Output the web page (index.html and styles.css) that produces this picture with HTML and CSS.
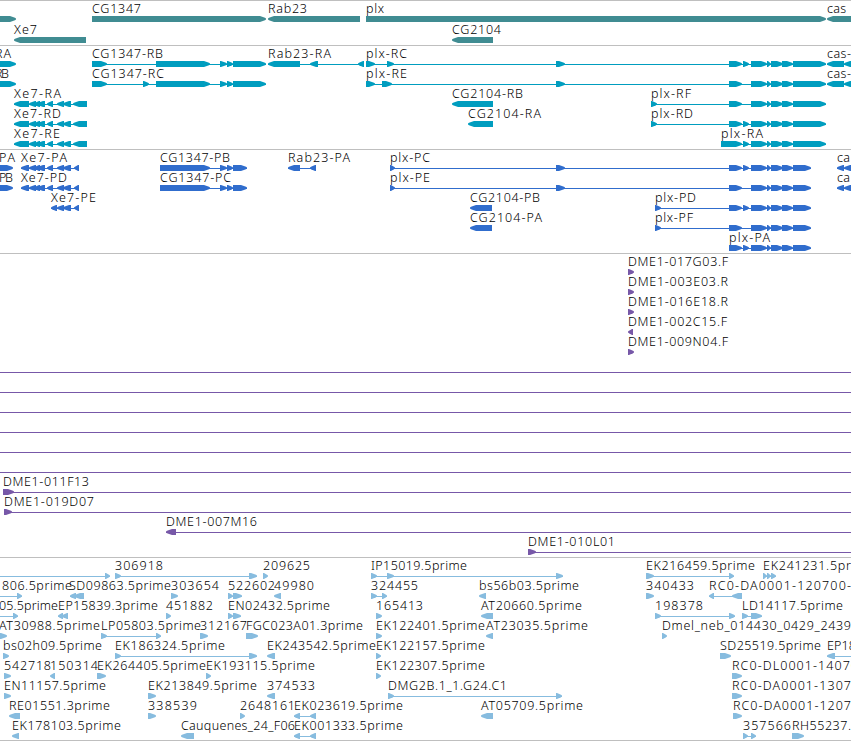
FILE: index.html
```
<!DOCTYPE html>
<html>
<head>
    <meta charset="utf-8">
    <title>Genome tracks</title>
    <link rel="stylesheet" href="styles.css">
</head>
<body>
<div class="browser" id="browser">
    <div class="track genes" id="genes"></div>
    <div class="track transcripts" id="transcripts"></div>
    <div class="track proteins" id="proteins"></div>
    <div class="track clones" id="clones"></div>
    <div class="track ests" id="ests"></div>
</div>
<script src="tracks.js"></script>
</body>
</html>
```
FILE: styles.css
```
* {
    margin: 0;
    padding: 0;
    box-sizing: border-box;
}

body {
    background: #fff;
    overflow: hidden;
}

.browser {
    width: 851px;
    border-bottom: 1px solid #bfbfbf;
}

.track {
    border-top: 1px solid #bfbfbf;
    overflow: hidden;
}

.track svg {
    display: block;
    width: 851px;
    height: 100%;
}

.track text {
    font-family: "Noto Sans", "DejaVu Sans", sans-serif;
    font-size: 12.5px;
    font-weight: 300;
    fill: #000;
}

.genes {
    height: 45px;
    fill: #408c92;
}

.transcripts {
    height: 104px;
    fill: #009dbf;
}

.proteins {
    height: 104px;
    fill: #306dcd;
}

.clones {
    height: 304px;
    fill: #7758a8;
}

.ests {
    height: 183px;
    fill: #87bcdf;
}
```
FILE: tracks.js
```
var NS = "http://www.w3.org/2000/svg";
var WIDTH = 851;
var BAR_TOP = 15;
var BAR_HEIGHT = 6;
var TIP = 6;

// exons shared by several transcripts
var xe7 = [[14, 29], [29, 36], [34, 40], [37, 45], [47, 53], [57, 64], [63, 71], [73, 87]];
var xe7p = [[21, 29], [29, 36], [34, 40], [37, 45], [47, 53], [57, 64], [63, 71], [74, 79]];
var plxTail = [[751, 767], [767, 771], [771, 783], [782, 793], [793, 826]];
var plxTailP = [[751, 767], [767, 771], [771, 783], [782, 793], [793, 811]];
var cgTail = [[220, 227], [227, 233], [233, 266]];
var cgTailP = [[220, 227], [227, 233], [233, 247]];
var small = [[743, 749]];

// [row, strand, label, label start, label end, exons]
var genes = [
    [0, 1, "", 0, 0, [[-20, 16]]],
    [0, 1, "CG1347", 92, 141, [[92, 266]]],
    [0, -1, "Rab23", 268, 307, [[268, 360]]],
    [0, 1, "plx", 366, 384, [[366, 826]]],
    [0, -1, "cas", 827, 846, [[827, 880]]],
    [1, -1, "Xe7", 14, 37, [[14, 86]]],
    [1, -1, "CG2104", 452, 501, [[452, 493]]]
];

var transcripts = [
    [0, 1, "RA", -5, 11, [[-20, 16]]],
    [0, 1, "CG1347-RB", 92, 163, [[92, 107], [156, 210]].concat(cgTail)],
    [0, -1, "Rab23-RA", 268, 331, [[268, 300], [310, 318], [358, 364]]],
    [0, 1, "plx-RC", 366, 407, [[366, 375], [387, 394], [556, 565], [729, 742]].concat(small, plxTail)],
    [0, -1, "cas-", 827, 851, [[827, 844], [844, 870]]],
    [1, 1, "RB", -5, 9, [[-20, 16]]],
    [1, 1, "CG1347-RC", 92, 164, [[92, 107], [143, 149], [156, 210]].concat(cgTail)],
    [1, 1, "plx-RE", 366, 407, [[366, 375], [382, 392], [556, 565], [729, 742]].concat(plxTail)],
    [1, -1, "cas-", 827, 851, [[827, 844], [844, 870]]],
    [2, -1, "Xe7-RA", 14, 61, xe7],
    [2, -1, "CG2104-RB", 452, 523, [[452, 493]]],
    [2, 1, "plx-RF", 651, 691, [[651, 657], [729, 742]].concat(plxTail)],
    [3, -1, "Xe7-RD", 14, 61, xe7],
    [3, -1, "CG2104-RA", 468, 541, [[468, 493]]],
    [3, 1, "plx-RD", 651, 693, [[651, 657], [729, 742]].concat(small, plxTail)],
    [4, -1, "Xe7-RE", 14, 60, xe7],
    [4, 1, "plx-RA", 721, 763, [[721, 742]].concat(small, plxTail)]
];

var proteins = [
    [0, 1, "PA", -1, 15, [[-20, 13]]],
    [0, -1, "Xe7-PA", 21, 67, xe7p],
    [0, 1, "CG1347-PB", 160, 230, [[160, 210]].concat(cgTailP)],
    [0, -1, "Rab23-PA", 288, 350, [[288, 300], [310, 316]]],
    [0, 1, "plx-PC", 390, 430, [[390, 395], [556, 565], [729, 742]].concat(small, plxTailP)],
    [0, -1, "ca", 837, 850, [[837, 844], [844, 870]]],
    [1, 1, "PB", -1, 13, [[-20, 13]]],
    [1, -1, "Xe7-PD", 21, 67, xe7p],
    [1, 1, "CG1347-PC", 160, 231, [[160, 210]].concat(cgTailP)],
    [1, 1, "plx-PE", 390, 430, [[390, 395], [556, 565], [729, 742]].concat(plxTailP)],
    [1, -1, "ca", 837, 850, [[837, 844], [844, 870]]],
    [2, -1, "Xe7-PE", 51, 96, [[51, 57], [57, 64], [63, 71], [74, 79]]],
    [2, -1, "CG2104-PB", 470, 540, [[470, 492]]],
    [2, 1, "plx-PD", 655, 696, [[655, 661], [729, 742]].concat(small, plxTailP)],
    [3, -1, "CG2104-PA", 470, 542, [[470, 492]]],
    [3, 1, "plx-PF", 655, 693, [[655, 661], [729, 742]].concat(plxTailP)],
    [4, 1, "plx-PA", 729, 770, [[729, 742]].concat(small, plxTailP)]
];

var clones = [
    [0, 1, "DME1-017G03.F", 628, 728, [[628, 634]]],
    [1, 1, "DME1-003E03.R", 628, 728, [[628, 634]]],
    [2, 1, "DME1-016E18.R", 628, 728, [[628, 634]]],
    [3, -1, "DME1-002C15.F", 628, 727, [[628, 633]]],
    [4, 1, "DME1-009N04.F", 628, 728, [[628, 634]]],
    [5, 1, "", 0, 0, [[-20, -10], [870, 880]]],
    [6, 1, "", 0, 0, [[-20, -10], [870, 880]]],
    [7, 1, "", 0, 0, [[-20, -10], [870, 880]]],
    [8, 1, "", 0, 0, [[-20, -10], [870, 880]]],
    [9, 1, "", 0, 0, [[-20, -10], [870, 880]]],
    [10, 1, "", 0, 0, [[-20, -10], [870, 880]]],
    [11, 1, "DME1-011F13", 3, 89, [[3, 14], [870, 880]]],
    [12, 1, "DME1-019D07", 4, 94, [[4, 12], [870, 880]]],
    [13, -1, "DME1-007M16", 166, 257, [[166, 176], [870, 880]]],
    [14, 1, "DME1-010L01", 528, 615, [[528, 536], [870, 880]]]
];

var ests = [
    [0, 1, "", 0, 0, [[-20, -10], [105, 110]]],
    [0, 1, "306918", 115, 163, [[115, 121], [249, 257]]],
    [0, 1, "209625", 263, 310, [[263, 268]]],
    [0, 1, "IP15019.5prime", 371, 467, [[371, 377], [387, 394], [556, 563]]],
    [0, 1, "EK216459.5prime", 646, 755, [[646, 654], [729, 734]]],
    [0, 1, "EK241231.5pr", 763, 851, [[763, 767], [767, 771], [771, 776]]],
    [1, 1, "806.5prime", 2, 72, [[-20, -10], [17, 22]]],
    [1, -1, "SD09863.5prime", 69, 171, [[70, 76], [74, 84]]],
    [1, 1, "303654", 171, 219, [[171, 178]]],
    [1, 1, "522602", 228, 275, [[228, 233], [233, 242]]],
    [1, -1, "49980", 274, 314, [[274, 281]]],
    [1, 1, "324455", 371, 418, [[371, 377], [382, 387]]],
    [1, -1, "bs56b03.5prime", 479, 579, [[479, 486]]],
    [1, 1, "340433", 646, 694, [[646, 654]]],
    [1, -1, "RC0-DA0001-120700-", 709, 851, [[709, 714], [732, 742]]],
    [2, 1, "05.5prime", -1, 58, [[-20, -10], [13, 18]]],
    [2, -1, "EP15839.3prime", 58, 158, [[58, 63], [62, 68]]],
    [2, 1, "451882", 166, 213, [[166, 171]]],
    [2, 1, "EN02432.5prime", 228, 330, [[228, 233], [233, 241]]],
    [2, 1, "165413", 376, 423, [[376, 382]]],
    [2, -1, "AT20660.5prime", 481, 582, [[481, 493]]],
    [2, 1, "198378", 655, 703, [[655, 661], [729, 735]]],
    [2, 1, "LD14117.5prime", 742, 843, [[742, 748], [751, 762]]],
    [3, 1, "AT30988.5prime", -1, 100, [[-4, 7]]],
    [3, 1, "LP05803.5prime", 101, 201, [[101, 107], [156, 161]]],
    [3, 1, "312167", 200, 247, [[200, 208]]],
    [3, 1, "FGC023A01.3prime", 246, 363, [[246, 258]]],
    [3, 1, "EK122401.5prime", 376, 485, [[376, 382]]],
    [3, -1, "AT23035.5prime", 486, 588, [[486, 493]]],
    [3, 1, "Dmel_neb_014430_0429_2439", 662, 851, [[662, 667]]],
    [4, 1, "bs02h09.5prime", 3, 102, [[3, 9]]],
    [4, 1, "EK186324.5prime", 115, 225, [[115, 121], [249, 257]]],
    [4, -1, "EK243542.5prime", 267, 376, [[267, 275]]],
    [4, 1, "EK122157.5prime", 376, 485, [[376, 381]]],
    [4, 1, "SD25519.5prime", 720, 821, [[720, 731]]],
    [4, -1, "EP18", 827, 856, [[827, 835], [870, 880]]],
    [5, 1, "542718", 4, 51, [[4, 11]]],
    [5, -1, "150314", 50, 98, [[50, 55]]],
    [5, 1, "EK264405.5prime", 97, 206, [[97, 106]]],
    [5, 1, "EK193115.5prime", 206, 315, [[206, 211]]],
    [5, 1, "EK122307.5prime", 376, 485, [[376, 381]]],
    [5, 1, "RC0-DL0001-14070", 732, 858, [[732, 742]]],
    [6, 1, "EN11157.5prime", 4, 106, [[4, 11]]],
    [6, 1, "EK213849.5prime", 148, 257, [[148, 156]]],
    [6, -1, "374533", 267, 315, [[267, 275]]],
    [6, 1, "DMG2B.1_1.G24.C1", 388, 507, [[388, 394], [556, 562]]],
    [6, 1, "RC0-DA0001-1307", 732, 851, [[732, 742]]],
    [7, -1, "RE01551.3prime", 9, 110, [[9, 20]]],
    [7, 1, "338539", 148, 197, [[148, 156]]],
    [7, 1, "2648161", 240, 295, [[240, 245]]],
    [7, -1, "EK023619.5prime", 294, 403, [[294, 300], [310, 316]]],
    [7, -1, "AT05709.5prime", 481, 583, [[481, 493]]],
    [7, 1, "RC0-DA0001-1207", 733, 851, [[733, 742]]],
    [8, -1, "EK178103.5prime", 12, 121, [[12, 19]]],
    [8, -1, "Cauquenes_24_F06", 181, 295, [[181, 194]]],
    [8, -1, "EK001333.5prime", 294, 403, [[294, 300], [310, 316]]],
    [8, 1, "357566", 743, 791, [[743, 748], [751, 756]]],
    [8, 1, "RH55237.", 792, 851, [[792, 804]]]
];

function add(parent, name, attrs) {
    var el = document.createElementNS(NS, name);
    for (var key in attrs) {
        el.setAttribute(key, attrs[key]);
    }
    parent.appendChild(el);
    return el;
}

// a box that ends in a blunt point on its strand side
function exonPoints(x1, x2, strand, top) {
    var tip = Math.min(TIP, x2 - x1 - 1);
    var mid = top + BAR_HEIGHT / 2;
    var bottom = top + BAR_HEIGHT;
    var start = strand > 0 ? x1 : x2;
    var end = strand > 0 ? x2 : x1;
    var neck = end - strand * tip;
    return [[start, top], [neck, top], [end - strand, mid - 1.2], [end, mid - 0.5], [end, mid + 0.5],
        [end - strand, mid + 1.2], [neck, bottom], [start, bottom]].join(" ");
}

function drawTrack(id, features, pitch) {
    var svg = add(document.getElementById(id), "svg", {});
    features.forEach(function (f) {
        var top = BAR_TOP + f[0] * pitch;
        var exons = f[5];
        var first = exons[0][0];
        var last = exons[exons.length - 1][1];
        if (exons.length > 1) {
            add(svg, "rect", {x: first, y: top + 3, width: last - first, height: 1});
        }
        exons.forEach(function (e) {
            if (e[0] < WIDTH) {
                add(svg, "polygon", {points: exonPoints(e[0], e[1], f[1], top)});
            }
        });
        if (f[2]) {
            var label = add(svg, "text", {x: f[3], y: top - 3, textLength: f[4] - f[3]});
            label.textContent = f[2];
        }
    });
}

drawTrack("genes", genes, 21);
drawTrack("transcripts", transcripts, 20);
drawTrack("proteins", proteins, 20);
drawTrack("clones", clones, 20);
drawTrack("ests", ests, 20);
```
